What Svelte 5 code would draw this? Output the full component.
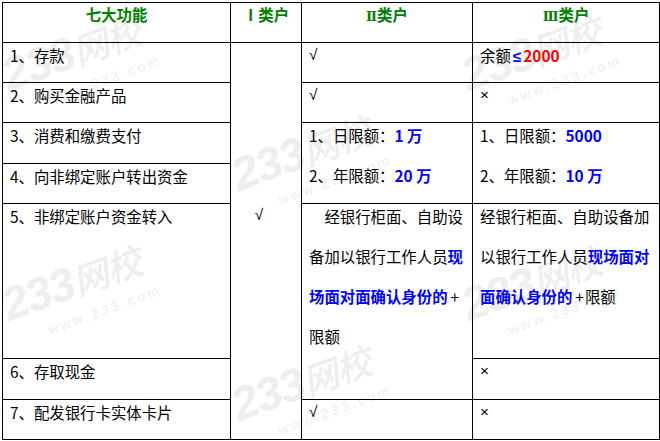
<script>
  const marks = [
    { x: -12, y: 34 },
    { x: 218, y: 134 },
    { x: 448, y: 34 },
    { x: -12, y: 264 },
    { x: 218, y: 364 },
    { x: 448, y: 264 }
  ];
</script>

<div class="page">
  {#each marks as m}
    <div class="mark" style="left: {m.x}px; top: {m.y}px">
      <div class="mark-logo">233<span>网校</span></div>
      <div class="mark-url">www.233.com</div>
    </div>
  {/each}

  <table>
    <colgroup>
      <col class="c1" />
      <col class="c2" />
      <col class="c3" />
      <col class="c4" />
    </colgroup>
    <thead>
      <tr>
        <th><p>七大功能</p></th>
        <th><p>Ⅰ类户</p></th>
        <th><p><span class="roman">Ⅱ</span>类户</p></th>
        <th><p><span class="roman">Ⅲ</span>类户</p></th>
      </tr>
    </thead>
    <tbody>
      <tr>
        <td><p>1、存款</p></td>
        <td class="check-all" rowspan="7"><p class="sym">√</p></td>
        <td><p class="sym">√</p></td>
        <td><p>余额<b class="blue sym le">≤</b><b class="red">2000</b></p></td>
      </tr>
      <tr>
        <td><p>2、购买金融产品</p></td>
        <td><p class="sym">√</p></td>
        <td><p class="sym">×</p></td>
      </tr>
      <tr class="wide">
        <td><p>3、消费和缴费支付</p></td>
        <td rowspan="2">
          <p>1、日限额：<b class="blue">1 万</b></p>
          <p class="next">2、年限额：<b class="blue">20 万</b></p>
        </td>
        <td rowspan="2">
          <p>1、日限额：<b class="blue">5000</b></p>
          <p class="next">2、年限额：<b class="blue">10 万</b></p>
        </td>
      </tr>
      <tr>
        <td><p>4、向非绑定账户转出资金</p></td>
      </tr>
      <tr class="tall">
        <td><p>5、非绑定账户资金转入</p></td>
        <td rowspan="2"><p class="indent">经银行柜面、自助设备加以银行工作人员<b class="blue">现场面对面确认身份的</b><span class="plus">+</span><wbr />限额</p></td>
        <td><p>经银行柜面、自助设备加以银行工作人员<b class="blue">现场面对面确认身份的</b><span class="plus">+</span>限额</p></td>
      </tr>
      <tr class="wide">
        <td><p>6、存取现金</p></td>
        <td><p class="sym">×</p></td>
      </tr>
      <tr>
        <td><p>7、配发银行卡实体卡片</p></td>
        <td><p class="sym">√</p></td>
        <td><p class="sym">×</p></td>
      </tr>
    </tbody>
  </table>
</div>

<style>
  :global(body) {
    margin: 0;
    background: #fff;
  }

  .page {
    position: relative;
    width: 660px;
    height: 441px;
    overflow: hidden;
    padding: 2px 0 0 2px;
    box-sizing: border-box;
    font-family: "Noto Sans CJK SC", "Noto Sans", sans-serif;
    font-size: 15.4px;
    color: #000;
  }

  .mark {
    position: absolute;
    width: 170px;
    transform: rotate(-20deg);
    transform-origin: left top;
    color: #eeeeee;
  }

  .mark-logo {
    margin-top: 22px;
    font-family: "Liberation Sans", "Noto Sans CJK SC", sans-serif;
    font-size: 46px;
    line-height: 46px;
    font-weight: 700;
    font-style: italic;
    letter-spacing: -1px;
    white-space: nowrap;
  }

  .mark-logo span {
    font-size: 36px;
    font-weight: 500;
  }

  .mark-url {
    margin: 3px 0 0 34px;
    font-family: "Liberation Sans", sans-serif;
    font-size: 14px;
    line-height: 16px;
    letter-spacing: 3px;
    white-space: nowrap;
  }

  table {
    position: relative;
    width: 657px;
    height: 438px;
    table-layout: fixed;
    border-collapse: collapse;
  }

  .c1 { width: 228px; }
  .c2 { width: 71px; }
  .c3 { width: 171px; }
  .c4 { width: 187px; }

  tr {
    height: 40px;
  }

  tr.wide {
    height: 41px;
  }

  tr.tall {
    height: 155px;
  }

  th, td {
    padding: 0 7px;
    border: 1px solid #000;
    vertical-align: top;
    text-align: left;
    font-weight: 400;
  }

  th {
    text-align: center;
    font-weight: 700;
    color: #008000;
  }

  p {
    margin: -8px 0 0;
    line-height: 40px;
  }

  th p {
    margin-top: -9px;
  }

  p.next {
    margin-top: 0;
  }

  p.indent {
    text-indent: 1em;
  }

  .sym {
    font-family: "Liberation Sans", sans-serif;
  }

  .le {
    margin: 0 2px;
  }

  .plus {
    margin: 0 1px 0 3px;
  }

  .roman {
    font-family: "DejaVu Serif", serif;
    font-size: 13px;
  }

  td.check-all {
    padding: 0 21px 44px 7px;
    text-align: center;
    vertical-align: middle;
  }

  b {
    font-weight: 700;
  }

  .blue {
    color: #00f;
  }

  .red {
    color: #f00;
  }
</style>
